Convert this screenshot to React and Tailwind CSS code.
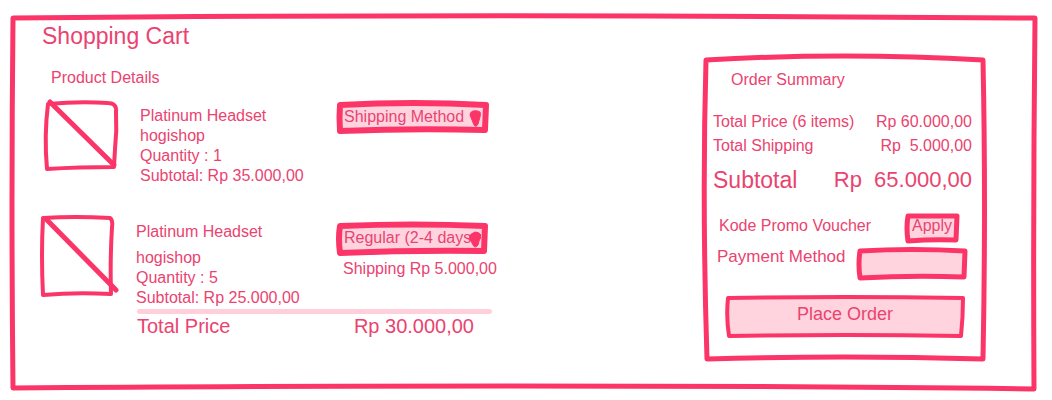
import React from "react";

function Sketch({ w, h, d, stroke = 5, fill = "none" }) {
  return (
    <svg
      className="pointer-events-none absolute inset-0 size-full overflow-visible"
      viewBox={`0 0 ${w} ${h}`}
      preserveAspectRatio="none"
      aria-hidden="true"
    >
      <path
        d={d}
        fill={fill}
        stroke="#fb3568"
        strokeWidth={stroke}
        strokeLinejoin="round"
        strokeLinecap="round"
        vectorEffect="non-scaling-stroke"
      />
    </svg>
  );
}

function Picker({ label, value, outline, arrow }) {
  return (
    <div className="relative h-[33px] w-38">
      <Sketch w={152} h={33} d={outline} fill="#ffd4df" stroke={6} />
      <select
        aria-label={label}
        defaultValue={value}
        className="relative block h-[31px] w-full appearance-none bg-transparent pl-[7px] text-base leading-6 outline-none"
      >
        <option>{value}</option>
      </select>
      <svg
        className="pointer-events-none absolute top-2 right-2 h-5 w-3"
        viewBox="0 0 12 20"
        aria-hidden="true"
      >
        <path d={arrow} fill="#fb3568" stroke="#fb3568" strokeLinejoin="round" />
      </svg>
    </div>
  );
}

function CartItem({ thumb, name, nameClass, shop, quantity, subtotal, className, shipping }) {
  return (
    <article className="grid grid-cols-[297px_auto] items-start">
      <div className={`flex items-start ${className}`}>
        {thumb}
        <div className="leading-5">
          <h3 className={nameClass}>{name}</h3>
          <p>{shop}</p>
          <p>Quantity : {quantity}</p>
          <p>Subtotal: {subtotal}</p>
        </div>
      </div>
      {shipping}
    </article>
  );
}

export default function App() {
  return (
    <div className="bg-white pt-[13px] pr-[15px] pb-[9px] pl-[10px] font-['Liberation_Sans',Arial,sans-serif] text-base text-[#ea4370]">
      <main className="relative flex items-start justify-between pr-[51px] pb-[29px] pl-[30px]">
        <Sketch
          w={1027}
          h={378}
          d="M3 5 Q350 2 640 3 T1025 5 Q1023 190 1024 376 Q800 373 500 373 T3 375 Q1 190 3 5Z"
        />
        <section className="relative w-[452px] shrink-0 pt-2">
          <h1 className="pl-[2px] text-[23px] leading-[30px]">Shopping Cart</h1>
          <h2 className="mt-[17px] pl-[11px] leading-5">Product Details</h2>

          <div className="mt-[13px]">
            <CartItem
              className="pl-1"
              thumb={
                <div className="relative mr-[22px] h-[70px] w-[74px] shrink-0">
                  <Sketch
                    w={74}
                    h={70}
                    stroke={4}
                    d="M4 3 Q35 0 64 2 Q73 2 72 11 Q73 30 71 48 L70 66 Q35 66 3 68 Q0 35 4 3Z"
                  />
                  <Sketch w={74} h={70} d="M6 1 L70 64" />
                </div>
              }
              name="Platinum Headset"
              nameClass="pt-[5px]"
              shop="hogishop"
              quantity={1}
              subtotal="Rp 35.000,00"
              shipping={
                <Picker
                  label="Shipping for item 1"
                  value="Shipping Method"
                  outline="M3 4 Q76 0 149 4 L148 29 Q76 27 3 30 Q2 16 3 4Z"
                  arrow="M1 6 Q1 3 4 2 Q8 1 11 3 Q12 5 11 8 L9 15 Q7 19 5 16 Z"
                />
              }
            />
          </div>

          <div className="mt-[29px]">
            <CartItem
              className=""
              thumb={
                <div className="relative mr-[22px] h-[82px] w-[74px] shrink-0">
                  <Sketch
                    w={74}
                    h={82}
                    stroke={4}
                    d="M3 3 Q35 1 70 3 Q73 5 72 12 Q70 45 71 79 Q35 77 3 80 Q1 40 3 3Z"
                  />
                  <Sketch w={74} h={82} d="M7 5 L76 75" />
                </div>
              }
              name="Platinum Headset"
              nameClass="pt-[7px] pb-1.5"
              shop="hogishop"
              quantity={5}
              subtotal="Rp 25.000,00"
              shipping={
                <div className="pt-[7px]">
                  <Picker
                    label="Shipping for item 2"
                    value="Regular (2-4 days"
                    outline="M3 4 Q76 1 148 4 L147 29 Q76 28 3 31 Q1 16 3 4Z"
                    arrow="M0 7 Q1 4 6 2 Q10 2 12 5 Q12 8 10 11 L9 15 Q6 19 4 15 Z"
                  />
                  <p className="mt-1 pl-1.5 leading-5 whitespace-nowrap">Shipping Rp 5.000,00</p>
                </div>
              }
            />
          </div>

          <hr className="mt-px ml-[97px] h-[5px] rounded-full border-0 bg-[#ffd0dc]" />
          <dl className="ml-[97px] flex justify-between pr-[18px] text-xl leading-6">
            <dt>Total Price</dt>
            <dd>Rp 30.000,00</dd>
          </dl>
        </section>

        <aside className="relative mt-10 w-[284px] shrink-0 pt-[17px] pr-[14px] pb-[23px] pl-[11px]">
          <Sketch
            w={284}
            h={309}
            d="M4 7 Q142 -1 281 7 Q284 150 281 306 Q142 302 5 306 Q0 150 4 7Z"
          />
          <div className="relative">
            <h2 className="pl-[18px] leading-5">Order Summary</h2>
            <dl className="mt-[22px] space-y-1 leading-5 whitespace-pre">
              <div className="flex justify-between">
                <dt>Total Price (6 items)</dt>
                <dd>Rp 60.000,00</dd>
              </div>
              <div className="flex justify-between">
                <dt>Total Shipping</dt>
                <dd>{"Rp  5.000,00"}</dd>
              </div>
              <div className="flex justify-between pt-1 text-[22px] leading-8">
                <dt className="text-[23px]">Subtotal</dt>
                <dd>{"Rp  65.000,00"}</dd>
              </div>
            </dl>

            <div className="mt-[17px] flex items-start justify-between pr-3 pl-1.5">
              <span className="pt-[3px] leading-5">Kode Promo Voucher</span>
              <button type="button" className="relative h-[30px] w-14 pb-1 leading-5">
                <Sketch
                  w={56}
                  h={30}
                  fill="#ffd4df"
                  d="M4 3 L53 3 L52 27 Q28 26 4 28 Q2 15 4 3Z"
                />
                <span className="relative">Apply</span>
              </button>
            </div>

            <div className="mt-1 flex items-start justify-between pr-1 pl-1">
              <label htmlFor="payment" className="text-[17px] leading-5">
                Payment Method
              </label>
              <div className="relative h-[34px] w-28">
                <Sketch
                  w={112}
                  h={34}
                  fill="#ffd4df"
                  d="M4 4 Q56 1 109 4 L108 30 Q56 28 4 31 Q2 17 4 4Z"
                />
                <input
                  id="payment"
                  type="text"
                  className="relative size-full bg-transparent px-2 outline-none"
                />
              </div>
            </div>

            <div className="mt-[14px] pr-[7px] pl-3">
              <button type="button" className="relative h-11 w-full pb-1.5 text-lg leading-6">
                <Sketch
                  w={240}
                  h={44}
                  stroke={4}
                  fill="#ffd4df"
                  d="M3 3 Q120 1 238 3 Q238 22 236 41 Q120 39 4 41 Q1 22 3 3Z"
                />
                <span className="relative">Place Order</span>
              </button>
            </div>
          </div>
        </aside>
      </main>
    </div>
  );
}
